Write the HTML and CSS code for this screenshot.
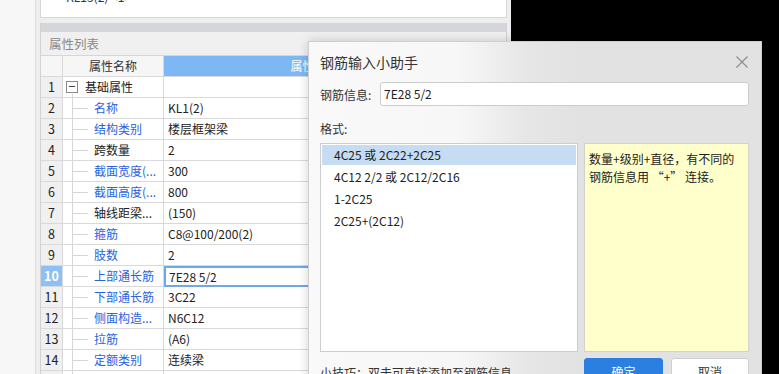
FILE: index.html
```html
<!DOCTYPE html>
<html lang="zh-CN">
<head>
<meta charset="utf-8">
<link rel="stylesheet" href="styles.css">
</head>
<body>
<div class="screen">
  <div class="app">
    <div class="side"></div>
    <div class="main">
      <div class="topbox"><span class="topname">KL13(2) &lt;1&gt;</span></div>
      <div class="panel">
        <div class="panel-bar"></div>
        <div class="panel-title">属性列表</div>
        <div class="grid">
          <div class="c num head"></div>
          <div class="c hname head">属性名称</div>
          <div class="c hval">属性值</div>
          <div class="c hextra head">附加</div>

          <div class="c num">1</div>
          <div class="c name root"><span class="minus"></span>基础属性</div>
          <div class="c val"></div>
          <div class="c extra"></div>

          <div class="c num">2</div>
          <div class="c name child blue">名称</div>
          <div class="c val">KL1(2)</div>
          <div class="c extra"></div>

          <div class="c num">3</div>
          <div class="c name child blue">结构类别</div>
          <div class="c val">楼层框架梁</div>
          <div class="c extra"></div>

          <div class="c num">4</div>
          <div class="c name child">跨数量</div>
          <div class="c val">2</div>
          <div class="c extra"></div>

          <div class="c num">5</div>
          <div class="c name child blue">截面宽度(...</div>
          <div class="c val">300</div>
          <div class="c extra"></div>

          <div class="c num">6</div>
          <div class="c name child blue">截面高度(...</div>
          <div class="c val">800</div>
          <div class="c extra"></div>

          <div class="c num">7</div>
          <div class="c name child">轴线距梁...</div>
          <div class="c val">(150)</div>
          <div class="c extra"></div>

          <div class="c num">8</div>
          <div class="c name child blue">箍筋</div>
          <div class="c val">C8@100/200(2)</div>
          <div class="c extra"></div>

          <div class="c num">9</div>
          <div class="c name child blue">肢数</div>
          <div class="c val">2</div>
          <div class="c extra"></div>

          <div class="c num sel">10</div>
          <div class="c name child blue">上部通长筋</div>
          <div class="c val edit">7E28 5/2</div>
          <div class="c extra"></div>

          <div class="c num">11</div>
          <div class="c name child blue">下部通长筋</div>
          <div class="c val">3C22</div>
          <div class="c extra"></div>

          <div class="c num">12</div>
          <div class="c name child blue">侧面构造...</div>
          <div class="c val">N6C12</div>
          <div class="c extra"></div>

          <div class="c num">13</div>
          <div class="c name child blue">拉筋</div>
          <div class="c val">(A6)</div>
          <div class="c extra"></div>

          <div class="c num">14</div>
          <div class="c name child blue">定额类别</div>
          <div class="c val">连续梁</div>
          <div class="c extra"></div>

          <div class="c num"></div>
          <div class="c name child"></div>
          <div class="c val"></div>
          <div class="c extra"></div>
        </div>
      </div>
    </div>
  </div>
  <div class="desk"></div>

  <div class="dialog">
    <div class="dlg-head">
      <span class="dlg-title">钢筋输入小助手</span>
      <svg class="close" width="12" height="12" viewBox="0 0 12 12"><path d="M0.5 0.5 L11.5 11.5 M11.5 0.5 L0.5 11.5" stroke="#8a8a8a" stroke-width="1.1" fill="none"/></svg>
    </div>
    <div class="info-row">
      <span class="info-label">钢筋信息:</span>
      <div class="info-input">7E28 5/2</div>
    </div>
    <div class="fmt-label">格式:</div>
    <div class="boxes">
      <div class="list">
        <div class="item selected">4C25 或 2C22+2C25</div>
        <div class="item">4C12 2/2 或 2C12/2C16</div>
        <div class="item">1-2C25</div>
        <div class="item">2C25+(2C12)</div>
      </div>
      <div class="note">数量+级别+直径，有不同的钢筋信息用 “+” 连接。</div>
    </div>
    <div class="foot">
      <span class="tip">小技巧：双击可直接添加至钢筋信息</span>
      <div class="btns">
        <div class="btn primary">确定</div>
        <div class="btn">取消</div>
      </div>
    </div>
  </div>
</div>
</body>
</html>
```

FILE: styles.css
```css
* { box-sizing: border-box; }
html, body { margin: 0; padding: 0; }
body {
  width: 779px;
  height: 374px;
  overflow: hidden;
  font-family: "Noto Sans CJK SC", "Noto Sans", sans-serif;
  font-size: 12px;
  color: #333;
  background: #000;
}
.screen {
  position: relative;
  display: flex;
  width: 779px;
  height: 374px;
  overflow: hidden;
}
.app {
  width: 511px;
  flex-shrink: 0;
  display: flex;
  background: #eeeeee;
}
.side {
  width: 36px;
  flex-shrink: 0;
  background: #f7f7f7;
  border-right: 1px solid #dcdcdc;
}
.main {
  flex: 1;
  min-height: 0;
  padding: 0 4px;
  display: flex;
  flex-direction: column;
  overflow: hidden;
}
.topbox {
  height: 18px;
  flex-shrink: 0;
  background: #fff;
  border: 1px solid #d6d6d6;
  border-top: none;
  overflow: hidden;
  padding-left: 25px;
}
.topname {
  display: block;
  margin-top: -10px;
  line-height: 14px;
  color: #333;
}
.panel {
  margin-top: 5px;
  flex: 1 0 auto;
  border-left: 1px solid #d2d2d2;
  border-right: 1px solid #d2d2d2;
  background: #fff;
  display: flex;
  flex-direction: column;
}
.panel-bar {
  height: 9px;
  flex-shrink: 0;
  background: #d5d6da;
}
.panel-title {
  height: 23px;
  flex-shrink: 0;
  background: #f0f0f0;
  color: #8a8a8a;
  font-size: 12.5px;
  line-height: 23px;
  padding-left: 8px;
}
.grid {
  flex-shrink: 0;
  display: grid;
  grid-template-columns: 22px 101px 290px 1fr;
  grid-auto-rows: 21px;
  border-top: 1px solid #d6d6d6;
}
.c {
  border-right: 1px solid #d9d9d9;
  border-bottom: 1px solid #d9d9d9;
  line-height: 20px;
  white-space: nowrap;
  overflow: hidden;
  position: relative;
  color: #222;
}
.num {
  background: #f0f0f0;
  text-align: center;
  font-size: 12.5px;
}
.head { background: #f6f6f6; }
.hname {
  background: #f6f6f6;
  text-align: center;
  color: #333;
}
.hval {
  background: #7db8f5;
  color: #fff;
  text-align: center;
}
.hextra { color: #333; text-align: center; }
.num.sel {
  background: #8ec1f3;
  color: #fff;
  font-weight: bold;
}
.name { padding-left: 31px; }
.name.root { padding-left: 3px; display: flex; align-items: center; }
.minus {
  width: 12px;
  height: 12px;
  border: 1px solid #8a8a8a;
  background: #fff;
  margin-right: 7px;
  position: relative;
}
.minus::after {
  content: "";
  position: absolute;
  left: 2px;
  top: 4px;
  width: 6px;
  height: 1px;
  background: #444;
}
.name.root::after {
  content: "";
  position: absolute;
  left: 9px;
  top: 17px;
  width: 1px;
  height: 4px;
  background: #d6d6d6;
}
.child::before {
  content: "";
  position: absolute;
  left: 9px;
  top: 0;
  width: 1px;
  height: 21px;
  background: #d6d6d6;
}
.child::after {
  content: "";
  position: absolute;
  left: 10px;
  top: 10px;
  width: 15px;
  height: 1px;
  background: #d6d6d6;
}
.blue { color: #2a62e0; }
.val { padding-left: 4px; }
.val.edit {
  border: 2px solid #6ea8e8;
  padding-left: 3px;
  line-height: 17px;
}
.desk { flex: 1; background: #000; }

.dialog {
  position: absolute;
  left: 308px;
  top: 41px;
  width: 454px;
  height: 360px;
  border: 1px solid #cfcfcf;
  background: linear-gradient(to right, #f9f9f9 0%, #f7f7f7 33%, #e6e6e6 48%, #e2e2e2 60%, #e2e2e2 100%);
  box-shadow: 0 0 10px rgba(0,0,0,0.18);
  padding: 0 12px 0 11px;
  display: flex;
  flex-direction: column;
  color: #333;
}
.dlg-head {
  height: 40px;
  flex-shrink: 0;
  display: flex;
  align-items: center;
  justify-content: space-between;
}
.dlg-title { font-size: 14px; }
.close { margin-right: 1px; }
.info-row {
  height: 24px;
  flex-shrink: 0;
  display: flex;
  align-items: center;
}
.info-label { width: 60px; }
.info-input {
  flex: 1;
  height: 24px;
  background: #fff;
  border: 1px solid #cdcdcd;
  border-radius: 3px;
  line-height: 22px;
  padding-left: 3px;
  color: #222;
}
.fmt-label {
  margin-top: 14px;
  height: 18px;
  flex-shrink: 0;
  line-height: 18px;
}
.boxes {
  margin-top: 5px;
  height: 209px;
  flex-shrink: 0;
  display: flex;
  gap: 6px;
}
.list {
  width: 258px;
  background: #fff;
  border: 1px solid #cdcdcd;
  padding: 1px;
}
.item {
  height: 20px;
  line-height: 20px;
  margin-bottom: 2px;
  padding-left: 12px;
  color: #222;
}
.item.selected { background: #c6dcf2; }
.note {
  flex: 1;
  background: #ffffcc;
  border: 1px solid #d2d2c8;
  padding: 6px 4px 0 4px;
  line-height: 18px;
  color: #222;
}
.foot {
  margin-top: 6px;
  flex-shrink: 0;
  display: flex;
  justify-content: space-between;
  align-items: flex-start;
}
.tip {
  margin-top: 6px;
  line-height: 18px;
}
.btns { display: flex; gap: 8px; }
.btn {
  width: 78px;
  height: 26px;
  line-height: 26px;
  text-align: center;
  border: 1px solid #cfcfcf;
  border-radius: 3px;
  background: #fff;
  color: #333;
}
.btn.primary {
  width: 79px;
  background: #2b7fe0;
  border-color: #2b7fe0;
  color: #fff;
}
```
